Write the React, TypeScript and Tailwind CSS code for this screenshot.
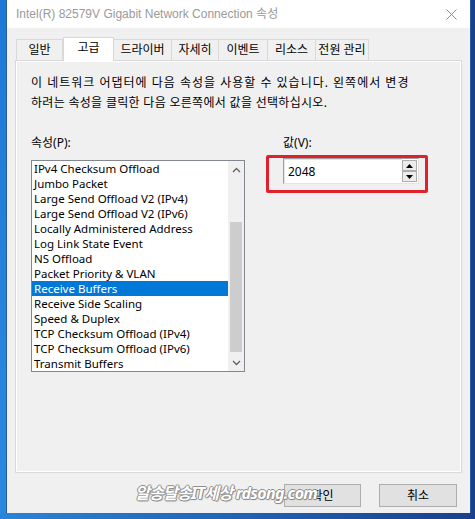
import React from "react";

const font = "font-['Noto_Sans','Noto_Sans_CJK_KR',sans-serif]";

const tabs = [
  { label: "일반", w: "w-[47px]" },
  { label: "고급", w: "w-[51px]", active: true },
  { label: "드라이버", w: "w-[58px]" },
  { label: "자세히", w: "w-[47px]" },
  { label: "이벤트", w: "w-[49px]" },
  { label: "리소스", w: "w-[48px]" },
  { label: "전원 관리", w: "w-[53px]" },
];

const items = [
  "IPv4 Checksum Offload",
  "Jumbo Packet",
  "Large Send Offload V2 (IPv4)",
  "Large Send Offload V2 (IPv6)",
  "Locally Administered Address",
  "Log Link State Event",
  "NS Offload",
  "Packet Priority & VLAN",
  "Receive Buffers",
  "Receive Side Scaling",
  "Speed & Duplex",
  "TCP Checksum Offload (IPv4)",
  "TCP Checksum Offload (IPv6)",
  "Transmit Buffers",
];

function Chevron({ down }: { down?: boolean }) {
  return (
    <svg width="9" height="6" viewBox="0 0 9 6" className={down ? "rotate-180" : ""}>
      <path d="M1 5 L4.5 1.5 L8 5" fill="none" stroke="#606060" strokeWidth="1.3" />
    </svg>
  );
}

function SpinButton({ down }: { down?: boolean }) {
  return (
    <div className="flex h-[11px] w-[15px] items-center justify-center border border-[#adadad] bg-[#ececec]">
      <svg width="7" height="4" viewBox="0 0 7 4">
        {down ? <path d="M0 0 H7 L3.5 4 Z" fill="#000" /> : <path d="M0 4 H7 L3.5 0 Z" fill="#000" />}
      </svg>
    </div>
  );
}

export default function App() {
  return (
    <div className={`flex h-[519px] w-[475px] flex-col overflow-hidden bg-[#1c4fa3] ${font}`}>
      <div className="flex h-[513px]">
        <div className="w-[6px] bg-gradient-to-b from-[#1d79d6] to-[#2a8ae0]" />
        <div className="relative flex w-[465px] flex-col border-x border-[#2c5a9e] bg-[#f0f0f0]">
          {/* title bar */}
          <div className="flex h-[28px] items-center justify-between bg-white pl-[9px] pr-[9px]">
            <span className="font-['Liberation_Sans','Noto_Sans_CJK_KR',sans-serif] text-[12px] text-[#9a9a9a]">
              Intel(R) 82579V Gigabit Network Connection 속성
            </span>
            <svg width="11" height="11" viewBox="0 0 11 11" className="mr-[4px]">
              <path d="M0.5 0.5 L10.5 10.5 M10.5 0.5 L0.5 10.5" stroke="#8a8a8a" strokeWidth="1" />
            </svg>
          </div>

          {/* tabs */}
          <div className="ml-[9px] mt-[9px] flex h-[23px] items-end">
            {tabs.map((t) =>
              t.active ? (
                <div
                  key={t.label}
                  className={`${t.w} relative z-10 -mb-px flex h-[24px] items-start justify-center border-x border-t border-[#d9d9d9] bg-white pt-[2px] text-[12px] leading-[16px] text-black`}
                >
                  {t.label}
                </div>
              ) : (
                <div
                  key={t.label}
                  className={`${t.w} flex h-[21px] items-center justify-center whitespace-nowrap border-t border-r border-[#d9d9d9] first:border-l text-[12px] leading-[16px] text-black`}
                >
                  {t.label}
                </div>
              ),
            )}
          </div>

          {/* tab panel */}
          <div className="ml-[8px] h-[413px] w-[447px] border border-[#d9d9d9]">
            <div className="h-full w-full border border-white pl-[14px] pt-[11px]">
              <p className="text-[12px] leading-[20px] text-black">
                <span className="tracking-[1px]">이 네트워크 어댑터에 다음 속성을 사용할 수 있습니다. 왼쪽에서 변경</span>
                <br />
                <span className="tracking-[0.3px]">하려는 속성을 클릭한 다음 오른쪽에서 값을 선택하십시오.</span>
              </p>

              <div className="mt-[22px] flex">
                <div className="flex w-[214px] flex-col">
                  <div className="text-[12px] leading-[16px]">속성(P):</div>
                  <div className="mt-[9px] flex h-[212px] border border-[#828790] bg-white">
                    <div className="flex w-[196px] flex-col">
                      {items.map((it) => (
                        <div
                          key={it}
                          className={`h-[15px] whitespace-nowrap pl-[2px] text-[11.5px] leading-[15px] ${
                            it === "Receive Buffers" ? "bg-[#0078d7] text-white" : "text-black"
                          }`}
                        >
                          {it}
                        </div>
                      ))}
                    </div>
                    <div className="flex w-[16px] flex-col bg-[#f0f0f0]">
                      <div className="flex h-[17px] items-center justify-center">
                        <Chevron />
                      </div>
                      <div className="flex flex-1 flex-col px-[2px] pt-[44px]">
                        <div className="h-[130px] bg-[#cdcdcd]" />
                      </div>
                      <div className="flex h-[17px] items-center justify-center">
                        <Chevron down />
                      </div>
                    </div>
                  </div>
                </div>

                <div className="ml-[21px] flex flex-col">
                  <div className="pl-[17px] text-[12px] leading-[16px]">값(V):</div>
                  <div className="mt-[4px] h-[38px] w-[162px] rounded-[2px] border-[3px] border-[#e0212b] pl-[14px]">
                    <div className="flex h-[26px] w-[136px] items-center border border-t-[#a0a0a0] border-l-[#a0a0a0] border-r-[#e3e3e3] border-b-[#e3e3e3] bg-white">
                      <div className="flex h-full flex-1 items-center border-t border-l border-[#e3e3e3] pl-[3px] text-[12px] text-black">
                        2048
                      </div>
                      <div className="mr-[1px] flex flex-col">
                        <SpinButton />
                        <SpinButton down />
                      </div>
                    </div>
                  </div>
                </div>
              </div>
            </div>
          </div>

          {/* buttons */}
          <div className="mt-[11px] flex justify-end gap-[18px] pr-[13px]">
            <button className="h-[23px] w-[77px] border border-[#adadad] bg-[#e1e1e1] text-[12px] text-black">확인</button>
            <button className="h-[23px] w-[78px] border border-[#adadad] bg-[#e1e1e1] text-[12px] text-black">취소</button>
          </div>

          {/* watermark */}
          <div className="absolute left-[128px] top-[481px] whitespace-pre text-[16px] font-bold italic tracking-[-0.7px] text-white [text-shadow:1px_0_0_#8c8c8c,-1px_0_0_#8c8c8c,0_1px_0_#8c8c8c,0_-1px_0_#8c8c8c,1px_1px_1px_#9a9a9a]">
            알송달송IT세상 rdsong.com
          </div>
        </div>
        <div className="flex-1 bg-[#1b3f8c]" />
      </div>
      <div className="flex-1 bg-gradient-to-r from-[#2a84d8] via-[#1f63b8] to-[#1b3f8c]" />
    </div>
  );
}
